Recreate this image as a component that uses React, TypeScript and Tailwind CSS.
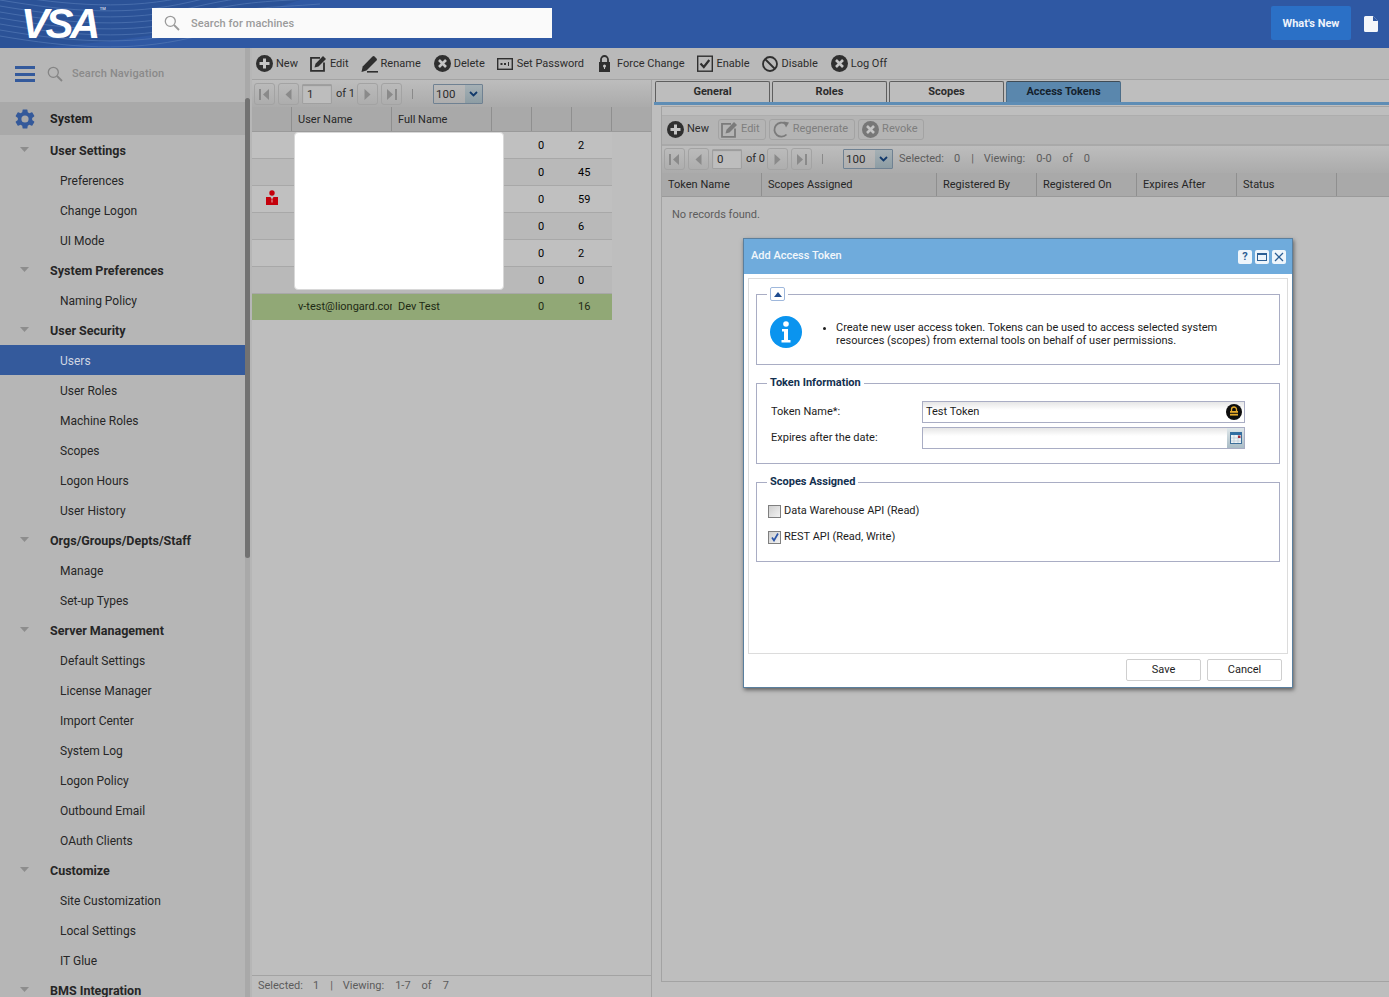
import React from 'react';

const plex = { fontFamily: 'Roboto, sans-serif' };

type NavRow = { label: string; head?: boolean; active?: boolean };

const navRows: NavRow[] = [
  { label: 'User Settings', head: true },
  { label: 'Preferences' },
  { label: 'Change Logon' },
  { label: 'UI Mode' },
  { label: 'System Preferences', head: true },
  { label: 'Naming Policy' },
  { label: 'User Security', head: true },
  { label: 'Users', active: true },
  { label: 'User Roles' },
  { label: 'Machine Roles' },
  { label: 'Scopes' },
  { label: 'Logon Hours' },
  { label: 'User History' },
  { label: 'Orgs/Groups/Depts/Staff', head: true },
  { label: 'Manage' },
  { label: 'Set-up Types' },
  { label: 'Server Management', head: true },
  { label: 'Default Settings' },
  { label: 'License Manager' },
  { label: 'Import Center' },
  { label: 'System Log' },
  { label: 'Logon Policy' },
  { label: 'Outbound Email' },
  { label: 'OAuth Clients' },
  { label: 'Customize', head: true },
  { label: 'Site Customization' },
  { label: 'Local Settings' },
  { label: 'IT Glue' },
  { label: 'BMS Integration', head: true },
];

const userRows = [
  { a: '0', b: '2', bg: 'bg-[#c0c0c0]' },
  { a: '0', b: '45', bg: 'bg-[#b9b9b9]' },
  { a: '0', b: '59', bg: 'bg-[#c0c0c0]', flag: true },
  { a: '0', b: '6', bg: 'bg-[#b9b9b9]' },
  { a: '0', b: '2', bg: 'bg-[#c0c0c0]' },
  { a: '0', b: '0', bg: 'bg-[#b9b9b9]' },
];

const PlusCircle = ({ dim }: { dim?: boolean }) => (
  <svg width="17" height="17" viewBox="0 0 17 17" className="shrink-0">
    <circle cx="8.5" cy="8.5" r="8.5" fill={dim ? '#777' : '#2f2f2f'} />
    <path d="M7 3.5h3V7h3.500v3H10v3.500H7V10H3.500V7H7z" fill="#c4c4c4" />
  </svg>
);

const XCircle = ({ dim }: { dim?: boolean }) => (
  <svg width="17" height="17" viewBox="0 0 17 17" className="shrink-0">
    <circle cx="8.5" cy="8.5" r="8.500" fill={dim ? '#777' : '#2f2f2f'} />
    <path d="M5 5l7 7M12 5l-7 7" stroke="#c4c4c4" strokeWidth="2.600" />
  </svg>
);

const EditIcon = ({ dim }: { dim?: boolean }) => {
  const c = dim ? '#7b7b7b' : '#2f2f2f';
  return (
    <svg width="17" height="17" viewBox="0 0 17 17" className="shrink-0">
      <path d="M10 2.800H1v13h13V7.500" fill="none" stroke={c} strokeWidth="1.800" />
      <path d="M4.500 12.500l1-3.800L13 1l3 3-7.500 7.500z" fill={c} />
    </svg>
  );
};

const RenameIcon = () => (
  <svg width="17" height="18" viewBox="0 0 17 18" className="shrink-0">
    <path d="M0.500 17l1.200-5.500L11.500 1.500a1.500 1.500 0 0 1 2.100 0l1.900 1.900a1.500 1.500 0 0 1 0 2.100L5.500 15.500z" fill="#2f2f2f" />
    <rect x="6" y="16" width="11" height="1.600" fill="#2f2f2f" />
  </svg>
);

const PasswordIcon = () => (
  <svg width="16" height="12" viewBox="0 0 16 12" className="shrink-0">
    <rect x="0.700" y="0.700" width="14.600" height="10.600" fill="none" stroke="#2f2f2f" strokeWidth="1.400" />
    <rect x="3.500" y="5" width="2" height="2" fill="#2f2f2f" />
    <rect x="7" y="5" width="2" height="2" fill="#2f2f2f" />
    <rect x="11" y="4" width="1" height="4" fill="#2f2f2f" />
  </svg>
);

const LockIcon = () => (
  <svg width="13" height="17" viewBox="0 0 13 17" className="shrink-0">
    <path d="M3 7V4.500a3.500 3.500 0 0 1 7 0V7" fill="none" stroke="#2f2f2f" strokeWidth="1.800" />
    <path d="M1 7h11v10H1z" fill="#2f2f2f" />
    <circle cx="6.500" cy="11" r="1.500" fill="#c4c4c4" />
    <rect x="6" y="11" width="1" height="3" fill="#c4c4c4" />
  </svg>
);

const EnableIcon = () => (
  <svg width="16" height="17" viewBox="0 0 16 17" className="shrink-0">
    <rect x="0.700" y="1.200" width="14.600" height="15" fill="none" stroke="#2f2f2f" strokeWidth="1.400" />
    <path d="M3.500 8.500l3.300 3.500 5.500-7" fill="none" stroke="#2f2f2f" strokeWidth="2.200" />
  </svg>
);

const BanIcon = () => (
  <svg width="16" height="16" viewBox="0 0 16 16" className="shrink-0">
    <circle cx="8" cy="8" r="7" fill="none" stroke="#2f2f2f" strokeWidth="1.800" />
    <path d="M3 3l10 10" stroke="#2f2f2f" strokeWidth="1.800" />
  </svg>
);

const RegenIcon = () => (
  <svg width="17" height="17" viewBox="0 0 17 17" className="shrink-0">
    <path d="M13.500 13.500A7 7 0 1 1 12.500 3" fill="none" stroke="#7b7b7b" strokeWidth="1.800" />
    <path d="M10.500 0.500l5.500 1-3 5z" fill="#7b7b7b" />
  </svg>
);

const SearchIcon = ({ size = 16, color = '#9a9a9a' }: { size?: number; color?: string }) => (
  <svg width={size} height={size} viewBox="0 0 16 16" className="shrink-0">
    <circle cx="6.300" cy="6.300" r="5" fill="none" stroke={color} strokeWidth="1.300" />
    <path d="M10 10l5 5" stroke={color} strokeWidth="1.800" />
  </svg>
);

const Tool = ({ icon, label, gap = 'gap-[3px]', className = '' }: { icon: React.ReactNode; label: string; gap?: string; className?: string }) => (
  <div className={`flex items-center text-[#2c2c2c] ${gap} ${className}`}>
    {icon}
    <span className="pt-[2px]">{label}</span>
  </div>
);

const PagerBtn = ({ dir }: { dir: 'first' | 'prev' | 'next' | 'last' }) => (
  <div className="w-[21px] h-[22px] rounded-[3px] border border-[#a3a3a3] flex items-center justify-center shrink-0">
    <svg width="13" height="13" viewBox="0 0 13 13">
      {dir === 'first' && (
        <>
          <rect x="1" y="1" width="2" height="11" fill="#8a8a8a" />
          <path d="M11 1v11L5 6.500z" fill="#8a8a8a" />
        </>
      )}
      {dir === 'prev' && <path d="M9.500 1v11L3.500 6.500z" fill="#8a8a8a" />}
      {dir === 'next' && <path d="M3.500 1v11l6-5.500z" fill="#8a8a8a" />}
      {dir === 'last' && (
        <>
          <rect x="10" y="1" width="2" height="11" fill="#8a8a8a" />
          <path d="M2 1v11l6-5.500z" fill="#8a8a8a" />
        </>
      )}
    </svg>
  </div>
);

const Pager = ({ page, of, className = '' }: { page: string; of: string; className?: string }) => (
  <div className={`flex items-center text-[11px] text-[#2c2c2c] ${className}`}>
    <div className="flex gap-[3px]">
      <PagerBtn dir="first" />
      <PagerBtn dir="prev" />
    </div>
    <div className="ml-[3px] w-[30px] h-[20px] border border-[#a0a0a0] rounded-[1px] bg-[#bdbdbd] pl-[4px] leading-[18px] text-[11.500px] shadow-[inset_0_1px_1px_#9a9a9a]">{page}</div>
    <span className="ml-[4px] pt-[1px] whitespace-nowrap">of {of}</span>
    <div className="ml-[2px] flex gap-[3px]">
      <PagerBtn dir="next" />
      <PagerBtn dir="last" />
    </div>
    <div className="ml-[10px] w-px h-[10px] bg-[#8a8a8a]" />
    <div className="ml-[20px] flex w-[50px] h-[20px] border border-[#6f8192] rounded-[1px]">
      <span className="flex-1 pl-[2px] leading-[18px] text-[11.500px]">100</span>
      <div className="w-[17px] bg-gradient-to-b from-[#a5b0b5] to-[#8d9da4] flex items-center justify-center">
        <svg width="9" height="6" viewBox="0 0 9 6"><path d="M1 1l3.500 3.500L8 1" fill="none" stroke="#123a6b" strokeWidth="1.800" /></svg>
      </div>
    </div>
  </div>
);

const HeadCell = ({ w, children }: { w: string; children?: React.ReactNode }) => (
  <div className={`${w} h-full border-r border-[#8f8f8f] pl-[6px] pt-[2px] flex items-center shrink-0 whitespace-nowrap`}>{children}</div>
);

const Fieldset = ({ title, className, children }: { title: React.ReactNode; className: string; children: React.ReactNode }) => (
  <fieldset className={`border border-[#a9adc4] mx-[7px] ${className}`}>
    <legend className="ml-[10px] px-[3px] text-[11px] font-bold text-[#13304f] leading-[10px]">{title}</legend>
    {children}
  </fieldset>
);

const Counts = ({ selected, viewing, total, className }: { selected: string; viewing: string; total: string; className: string }) => (
  <div className={`flex text-[#5c5c5c] whitespace-nowrap ${className}`}>
    <span>Selected:</span>
    <span className="ml-[10px]">{selected}</span>
    <span className="ml-[11px]">|</span>
    <span className="ml-[10px]">Viewing:</span>
    <span className="ml-[11px]">{viewing}</span>
    <span className="ml-[11px]">of</span>
    <span className="ml-[11px]">{total}</span>
  </div>
);

const Sidebar = () => (
  <aside className="w-[252px] shrink-0 h-[949px] bg-[#b6b6b6] relative overflow-hidden" style={plex}>
    <div className="h-[54px] flex items-center pl-[15px] pb-[2px]">
      <div className="w-[20px] flex flex-col gap-[3.500px]">
        <div className="h-[3px] bg-[#345a9c]" />
        <div className="h-[3px] bg-[#345a9c]" />
        <div className="h-[3px] bg-[#345a9c]" />
      </div>
      <div className="ml-[12px]"><SearchIcon color="#858585" /></div>
      <span className="ml-[9px] text-[11px] font-medium text-[#8a8a8a] tracking-[0.150px]">Search Navigation</span>
    </div>
    <div className="w-[245px] h-[33px] bg-[#a9a9a9] flex items-center pl-[13px]">
      <svg width="24" height="24" viewBox="0 0 24 24">
        <path
          fill="#34599a"
          d="M19.140 12.940c.04-.3.060-.62.060-.94s-.020-.64-.070-.94l2.030-1.580a.5.5 0 0 0 .12-.61l-1.920-3.320a.5.5 0 0 0-.590-.22l-2.390.96a7 7 0 0 0-1.620-.94l-.36-2.540a.48.48 0 0 0-.48-.41h-3.840a.47.47 0 0 0-.47.41l-.36 2.540c-.59.24-1.130.57-1.620.94l-2.390-.96a.48.48 0 0 0-.59.22L2.740 8.870a.47.47 0 0 0 .12.61l2.030 1.580c-.05.3-.090.63-.090.94s.020.64.070.94l-2.030 1.580a.5.5 0 0 0-.12.61l1.920 3.320c.12.22.370.29.590.22l2.390-.96c.5.380 1.030.7 1.620.94l.36 2.540c.05.240.24.41.48.41h3.840c.24 0 .44-.170.470-.41l.36-2.540c.59-.24 1.130-.56 1.620-.94l2.390.96c.22.080.47 0 .59-.22l1.920-3.320a.47.47 0 0 0-.12-.61zM12 15.600a3.600 3.600 0 1 1 0-7.200 3.600 3.600 0 0 1 0 7.200z"
        />
      </svg>
      <span className="ml-[13px] pt-[2px] text-[12.500px] font-bold text-[#1f1f1f]">System</span>
    </div>
    <div className="w-[245px]">
      {navRows.map(row => (
        <div
          key={row.label}
          className={`h-[30px] flex items-center pt-[2px] ${row.active ? 'bg-[#345a9c] text-[#cfd6e2]' : 'text-[#262626]'} ${row.head ? 'pl-[20px] font-bold text-[12.500px]' : 'pl-[60px] text-[12px]'}`}
        >
          {row.head && (
            <svg width="9" height="5" viewBox="0 0 9 5" className="mr-[21px] mb-[4px]"><path d="M0 0h9L4.500 5z" fill="#8d8d8d" /></svg>
          )}
          {row.label}
        </div>
      ))}
    </div>
    <div className="absolute right-[2px] top-0 bottom-0 w-[5px] bg-[#a9a9a9]" />
    <div className="absolute right-[2px] top-[50px] h-[460px] w-[5px] rounded-[3px] bg-[#727272]" />
  </aside>
);

const UsersPane = () => (
  <section className="w-[400px] shrink-0 h-full flex flex-col border-r border-[#a3a3a3] relative">
    <div className="h-[27px] flex items-center pl-[2px] pt-[1px] bg-gradient-to-b from-[#bdbdbd] to-[#ababab]">
      <Pager page="1" of="1" />
    </div>
    <div className="h-[25px] flex bg-[#a9a9a9] border-b border-[#9a9a9a] text-[#262626]">
      <HeadCell w="w-[40px]" />
      <HeadCell w="w-[100px]">User Name</HeadCell>
      <HeadCell w="w-[100px]">Full Name</HeadCell>
      <HeadCell w="w-[40px]" />
      <HeadCell w="w-[40px]" />
      <HeadCell w="w-[40px]" />
    </div>
    <div className="w-[360px]">
      {userRows.map((row, i) => (
        <div key={i} className={`h-[27px] flex items-center pt-[2px] border-b border-[#a8a8a8] ${row.bg}`}>
          <div className="w-[40px] flex justify-center pb-[5px]">
            {row.flag && (
              <svg width="12" height="15" viewBox="0 0 12 15">
                <circle cx="6" cy="3" r="2.700" fill="#c4000b" />
                <path d="M0 7h4.500L6 9.500 7.500 7H12v8H0z" fill="#c4000b" />
                <rect x="5.500" y="9.500" width="1" height="3" fill="#e8b4b4" />
              </svg>
            )}
          </div>
          <div className="w-[240px]" />
          <div className="w-[40px] pl-[6px]">{row.a}</div>
          <div className="w-[40px] pl-[6px]">{row.b}</div>
        </div>
      ))}
      <div className="h-[26px] flex items-center bg-[#91a876] text-[#1f2a14]">
        <div className="w-[40px]" />
        <div className="w-[100px] pl-[6px] overflow-hidden whitespace-nowrap">v-test@liongard.com</div>
        <div className="w-[100px] pl-[6px]">Dev Test</div>
        <div className="w-[40px]" />
        <div className="w-[40px] pl-[6px]">0</div>
        <div className="w-[40px] pl-[6px]">16</div>
      </div>
    </div>
    <div className="mt-auto h-[22px] border-t border-[#a3a3a3] flex items-center pl-[6px]">
      <Counts selected="1" viewing="1-7" total="7" className="" />
    </div>
    {/* block covering the names in the reference */}
    <div className="absolute left-[42px] top-[52px] w-[210px] h-[158px] bg-white rounded-[4px] border border-[#d8d8d8]" />
  </section>
);

const Tab = ({ label, active }: { label: string; active?: boolean }) => (
  <div
    className={`w-[115px] h-[21px] rounded-t-[2px] border border-b-0 flex items-center justify-center font-bold text-[11px] ${
      active ? 'bg-[#5a87ad] border-[#4c6d88] border-t-[#3f4b55] text-[#15222e]' : 'bg-[#bdbdbd] border-[#5f5f5f] text-[#2c2c2c]'
    }`}
  >
    {label}
  </div>
);

const DimBtn = ({ children }: { children: React.ReactNode }) => (
  <div className="h-[21px] px-[2px] rounded-[3px] border border-[#a3a3a3] flex items-center text-[#7e7e7e]">{children}</div>
);

const TokensPane = () => (
  <section className="flex-1 h-full flex flex-col pl-[2px]">
    <div className="pt-[1px] flex gap-[2px] pl-[1px]">
      <Tab label="General" />
      <Tab label="Roles" />
      <Tab label="Scopes" />
      <Tab label="Access Tokens" active />
    </div>
    <div className="h-[3px] bg-[#5e8db5]" />
    <div className="flex-1 mt-[1px] ml-[7px] mb-[15px] border border-[#a3a3a3] border-r-0 pt-[8px] flex flex-col">
      <div className="h-[29px] flex items-center gap-[3px] pl-[5px] pb-[2px] bg-[#b4b4b4] border-t border-[#adadad]">
        <div className="flex items-center gap-[3px] w-[48px] text-[#2c2c2c]"><PlusCircle /><span>New</span></div>
        <DimBtn><EditIcon dim /><span className="ml-[3px] mr-[3px]">Edit</span></DimBtn>
        <DimBtn><span className="ml-[1px]"><RegenIcon /></span><span className="ml-[3px] mr-[4px]">Regenerate</span></DimBtn>
        <DimBtn><span className="ml-[1px]"><XCircle dim /></span><span className="ml-[3px] mr-[4px]">Revoke</span></DimBtn>
      </div>
      <div className="h-[2px] bg-[#a9a9a9]" />
      <div className="h-[27px] flex items-center pl-[2px] bg-gradient-to-b from-[#bdbdbd] to-[#ababab]">
        <Pager page="0" of="0" className="-mt-[1px]" />
        <Counts selected="0" viewing="0-0" total="0" className="ml-[6px]" />
      </div>
      <div className="h-[24px] flex bg-[#a9a9a9] border-b border-[#9a9a9a] text-[#262626]">
        <HeadCell w="w-[100px]">Token Name</HeadCell>
        <HeadCell w="w-[175px]">Scopes Assigned</HeadCell>
        <HeadCell w="w-[100px]">Registered By</HeadCell>
        <HeadCell w="w-[100px]">Registered On</HeadCell>
        <HeadCell w="w-[100px]">Expires After</HeadCell>
        <HeadCell w="w-[100px]">Status</HeadCell>
      </div>
      <div className="pl-[10px] pt-[10px] text-[#5c5c5c]">No records found.</div>
    </div>
  </section>
);

const Modal = () => (
  <div className="absolute left-[743px] top-[238px] w-[550px] h-[450px] bg-white border border-[#5a7f9e] shadow-[1px_2px_4px_rgba(0,0,0,0.5)] flex flex-col text-[#1d1d1d]">
    <div className="h-[35px] shrink-0 bg-[#6fabdc] flex items-center pl-[7px] pr-[6px] text-[#f2f7fb] text-[11px] font-medium">
      <span>Add Access Token</span>
      <div className="ml-auto flex gap-[3px]">
        <div className="w-[14px] h-[14px] rounded-[2px] bg-[#eef5fb] flex items-center justify-center text-[#2d5f94] font-bold text-[11px] leading-none">?</div>
        <div className="w-[14px] h-[14px] rounded-[2px] bg-[#eef5fb] flex items-center justify-center">
          <div className="w-[10px] h-[8px] border border-t-2 border-[#2d5f94]" />
        </div>
        <div className="w-[14px] h-[14px] rounded-[2px] bg-[#eef5fb] flex items-center justify-center">
          <svg width="10" height="10" viewBox="0 0 10 10"><path d="M1 1l8 8M9 1l-8 8" stroke="#2d5f94" strokeWidth="1.300" /></svg>
        </div>
      </div>
    </div>
    <div className="mx-[4px] mt-[4px] h-[376px] shrink-0 border border-[#dcdcdc] flex flex-col">
      <div className="mt-[8px]">
        <fieldset className="border border-[#a9adc4] mx-[7px] h-[78px] flex">
          <legend className="ml-[10px] px-[3px] leading-[0]">
            <div className="w-[15px] h-[14px] rounded-[2px] border border-[#9fb8dc] flex items-center justify-center bg-white">
              <svg width="8" height="5" viewBox="0 0 8 5"><path d="M0 5l4-5 4 5z" fill="#1f4c8f" /></svg>
            </div>
          </legend>
          <div className="flex items-start pl-[13px] pt-[15px]">
            <svg width="32" height="32" viewBox="0 0 32 32" className="shrink-0">
              <circle cx="16" cy="16" r="16" fill="#0a94ef" />
              <circle cx="16" cy="8" r="2.800" fill="#fff" />
              <path d="M12 13h6v11h2.500v2.500h-9V24H14v-8.500h-2z" fill="#fff" />
            </svg>
            <ul className="list-disc ml-[20px] pl-[14px] pt-[5px] w-[420px] text-[11px] leading-[13px]">
              <li>Create new user access token. Tokens can be used to access selected system resources (scopes) from external tools on behalf of user permissions.</li>
            </ul>
          </div>
        </fieldset>
      </div>
      <div className="mt-[13px]">
        <Fieldset title="Token Information" className="h-[86px]">
          <div className="pl-[14px] pt-[13px]">
            <div className="flex items-center h-[22px]">
              <span className="w-[151px]">Token Name*:</span>
              <div className="w-[323px] h-[22px] border border-[#a9adc4] bg-gradient-to-b from-[#e6e6e6] to-white to-40% flex items-center pl-[3px] pr-[2px] text-[11px]">
                <span className="pt-[1px]">Test Token</span>
                <svg width="16" height="16" viewBox="0 0 16 16" className="ml-auto">
                  <circle cx="8" cy="8" r="8" fill="#0d0d0d" />
                  <path d="M5.500 7V5.500a2.500 2.500 0 0 1 5 0V7" fill="none" stroke="#e3a92b" strokeWidth="1.300" />
                  <rect x="4" y="7" width="8" height="1.800" fill="#e3a92b" />
                  <rect x="4" y="9.800" width="8" height="1.800" fill="#e3a92b" />
                </svg>
              </div>
            </div>
            <div className="flex items-center h-[22px] mt-[4px]">
              <span className="w-[151px]">Expires after the date:</span>
              <div className="w-[323px] h-[22px] border border-[#a9adc4] bg-gradient-to-b from-[#e6e6e6] to-white to-40% flex">
                <div className="ml-auto w-[17px] h-full bg-gradient-to-b from-[#dfe7ea] to-[#a9bcc6] flex items-center justify-center">
                  <svg width="12" height="12" viewBox="0 0 12 12">
                    <rect x="0.500" y="0.500" width="11" height="11" fill="#eef3f6" stroke="#3d6f9a" />
                    <rect x="0.500" y="0.500" width="11" height="2.500" fill="#2f6ea3" />
                    <path d="M4 3v8M8 3v8M1 6h10M1 9h10" stroke="#b9c9d6" strokeWidth="0.700" />
                    <rect x="8" y="3.500" width="2.500" height="2.500" fill="#a12a3a" />
                  </svg>
                </div>
              </div>
            </div>
          </div>
        </Fieldset>
      </div>
      <div className="mt-[13px]">
        <Fieldset title="Scopes Assigned" className="h-[85px]">
          <div className="pl-[11px] pt-[17px]">
            <div className="flex items-center h-[14px]">
              <div className="w-[13px] h-[13px] border border-[#7f7f7f] bg-gradient-to-br from-[#cfcfcf] to-[#f2f2f2]" />
              <span className="ml-[3px]">Data Warehouse API (Read)</span>
            </div>
            <div className="flex items-center h-[14px] mt-[12px]">
              <div className="w-[13px] h-[13px] border border-[#7f7f7f] bg-gradient-to-br from-[#cfcfcf] to-[#f2f2f2] flex items-center justify-center">
                <svg width="10" height="10" viewBox="0 0 10 10"><path d="M2 5.500l2 3 4-7" fill="none" stroke="#2b55a8" strokeWidth="1.700" /></svg>
              </div>
              <span className="ml-[3px]">REST API (Read, Write)</span>
            </div>
          </div>
        </Fieldset>
      </div>
    </div>
    <div className="flex justify-end gap-[6px] pr-[10px] mt-[5px]">
      <div className="w-[75px] h-[22px] rounded-[2px] border border-[#cfcfcf] flex items-center justify-center">Save</div>
      <div className="w-[75px] h-[22px] rounded-[2px] border border-[#cfcfcf] flex items-center justify-center">Cancel</div>
    </div>
  </div>
);

export default function App() {
  return (
    <div className="w-[1389px] h-[997px] overflow-hidden relative bg-[#bebebe] text-[11px]" style={{ fontFamily: 'Roboto, sans-serif' }}>
      <header className="h-[48px] bg-[#2f58a3] flex items-center relative overflow-hidden">
        <svg width="420" height="48" viewBox="0 0 420 48" className="absolute left-0 top-0">
          <path d="M0 0h300c-60 20-180 48-300 48z" fill="#2a4f8f" opacity="0.600" />
          {[0, 6, 12, 18, 24, 30, 36, 42].map(o => (
            <path key={o} d={`M0 ${o - 6}C70 ${o + 6} 130 ${o + 10} 190 ${o - 4}S270 ${o - 16} 320 ${o - 20}`} fill="none" stroke="#5378b4" strokeWidth="0.700" />
          ))}
        </svg>
        <div className="relative ml-[21px] w-[131px] shrink-0 flex">
          <span className="italic font-bold text-white text-[42px] leading-none tracking-[-3.500px]" style={{ fontFamily: '"Liberation Sans", sans-serif' }}>VSA</span>
          <span className="text-[4px] text-white ml-[3px] mt-[3px]">TM</span>
        </div>
        <div className="relative w-[400px] h-[30px] -mt-[2px] bg-[#fafafa] flex items-center pl-[12px]">
          <SearchIcon size={16} />
          <span className="ml-[11px] pt-[2px] text-[11px] font-medium text-[#9b9b9b] tracking-[0.100px]" style={plex}>Search for machines</span>
        </div>
        <div className="ml-auto flex items-center pr-[11px]">
          <div className="w-[80px] h-[34px] -mt-[2px] pt-[2px] bg-[#2b70c6] rounded-[2px] flex items-center justify-center text-[#eef3fb] font-bold text-[11px]" style={plex}>What's New</div>
          <svg width="14" height="16" viewBox="0 0 14 16" className="ml-[13px]">
            <path d="M1.500 0H9l5 5v9.500a1.500 1.500 0 0 1-1.500 1.500h-11A1.500 1.500 0 0 1 0 14.500v-13A1.500 1.500 0 0 1 1.500 0z" fill="#f4f6fa" />
            <path d="M9 0v5h5z" fill="#2f58a3" />
          </svg>
        </div>
      </header>
      <div className="flex h-[949px]">
        <Sidebar />
        <main className="flex-1 flex flex-col min-w-0 -ml-[1px]">
          <div className="h-[32px] shrink-0 bg-[#b9b9b9] border-b border-[#a3a3a3] flex items-center pl-[5px]">
            <Tool icon={<PlusCircle />} label="New" />
            <Tool icon={<EditIcon />} label="Edit" className="ml-[12px]" />
            <Tool icon={<RenameIcon />} label="Rename" className="ml-[12px]" />
            <Tool icon={<XCircle />} label="Delete" className="ml-[13px]" />
            <Tool icon={<PasswordIcon />} label="Set Password" gap="gap-[4px]" className="ml-[12px]" />
            <Tool icon={<LockIcon />} label="Force Change" gap="gap-[6px]" className="ml-[14px]" />
            <Tool icon={<EnableIcon />} label="Enable" gap="gap-[4px]" className="ml-[12px]" />
            <Tool icon={<BanIcon />} label="Disable" gap="gap-[4px]" className="ml-[12px]" />
            <Tool icon={<XCircle />} label="Log Off" className="ml-[13px]" />
          </div>
          <div className="flex-1 flex min-h-0 pl-[1px]">
            <UsersPane />
            <TokensPane />
          </div>
        </main>
      </div>
      <Modal />
    </div>
  );
}
